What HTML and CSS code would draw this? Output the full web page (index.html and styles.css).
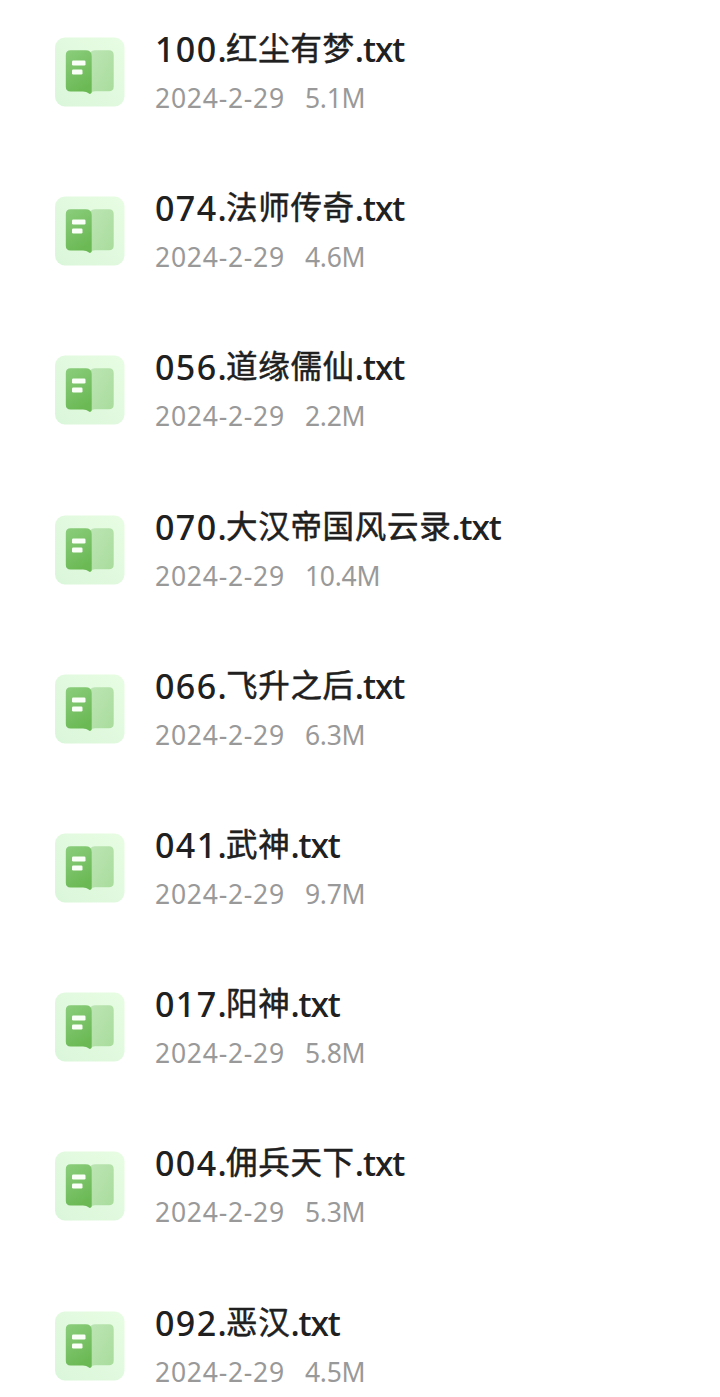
FILE: index.html
```html
<!DOCTYPE html>
<html lang="zh-CN">
<head>
<meta charset="utf-8">
<title>文件列表</title>
<link rel="stylesheet" href="styles.css">
</head>
<body>
<svg class="defs" width="0" height="0" aria-hidden="true">
  <defs>
    <linearGradient id="tile" x1="0" y1="1" x2="1" y2="0"><stop offset="0" stop-color="#daf6da"/><stop offset="1" stop-color="#e8fde3"/></linearGradient>
    <linearGradient id="cover" x1="0" y1="0" x2="0.4" y2="1"><stop offset="0" stop-color="#8bcd7c"/><stop offset="1" stop-color="#6bb955"/></linearGradient>
    <linearGradient id="page" x1="0" y1="0" x2="1" y2="1"><stop offset="0" stop-color="#bce5b4"/><stop offset="1" stop-color="#a9dc9c"/></linearGradient>
    <symbol id="book" viewBox="0 0 70 70">
      <rect x="0" y="0.5" width="69.5" height="69" rx="10" fill="url(#tile)"/>
      <path d="M35 15.5Q37 13.300 40 13.300H54Q58.700 13.300 58.700 18V49.500Q58.700 54.200 54 54.200H40Q37 54.200 35 56Z" fill="url(#page)"/>
      <path d="M15.500 13.300H30.500Q36.700 13.300 36.700 19V55.500Q35.500 57.800 33.500 56.300Q31.500 54.500 28 54.500H15.500Q10.800 54.500 10.800 49.800V18Q10.800 13.300 15.500 13.300Z" fill="url(#cover)"/>
      <rect x="17" y="23.500" width="13.500" height="5" rx="1.200" fill="#fafff8"/>
      <rect x="17" y="32.500" width="10.500" height="5" rx="1.200" fill="#fafff8"/>
    </symbol>
  </defs>
</svg>
<main class="files" id="files"></main>
<script src="files.js"></script>
</body>
</html>
```
FILE: styles.css
```css
body {
  margin: 0;
  background: #fff;
}

.defs {
  position: absolute;
}

.files {
  box-sizing: border-box;
  height: 1397px;
  padding-left: 55px;
  overflow: hidden;
}

.file {
  display: flex;
  gap: 30px;
  height: 159.2px;
}

.icon {
  flex: none;
  width: 70px;
  height: 70px;
  margin-top: 37px;
}

.name,
.meta {
  display: flex;
  white-space: pre;
  font-family: "Noto Sans", "Noto Sans CJK SC", sans-serif;
}

.name {
  height: 48px;
  padding-top: 25px;
  color: #202020;
  font-size: 34px;
  font-weight: 500;
  line-height: 48px;
}

.number {
  width: 71px;
  letter-spacing: 1.4px;
}

.title {
  font-family: "Noto Sans CJK SC", sans-serif;
  font-size: 31.5px;
  font-weight: 400;
  line-height: 43px;
  letter-spacing: 0.7px;
  -webkit-text-stroke: 0.5px #202020;
}

.extension {
  letter-spacing: -1.1px;
}

.meta {
  height: 36px;
  padding-top: 7px;
  color: #999;
  font-size: 26.5px;
  line-height: 36px;
}

.date {
  width: 150px;
  letter-spacing: 0.75px;
}

.size {
  letter-spacing: -0.3px;
}
```
FILE: files.js
```js
const files = [
  ["100.", "红尘有梦", "5.1M"],
  ["074.", "法师传奇", "4.6M"],
  ["056.", "道缘儒仙", "2.2M"],
  ["070.", "大汉帝国风云录", "10.4M"],
  ["066.", "飞升之后", "6.3M"],
  ["041.", "武神", "9.7M"],
  ["017.", "阳神", "5.8M"],
  ["004.", "佣兵天下", "5.3M"],
  ["092.", "恶汉", "4.5M"]
];

document.getElementById("files").innerHTML = files.map(([number, title, size]) => `
  <article class="file">
    <svg class="icon"><use href="#book"/></svg>
    <div class="details">
      <div class="name"><span class="number">${number}</span><span class="title">${title}</span><span class="extension">.txt</span></div>
      <div class="meta"><span class="date">2024-2-29</span><span class="size">${size}</span></div>
    </div>
  </article>`).join("");
```
